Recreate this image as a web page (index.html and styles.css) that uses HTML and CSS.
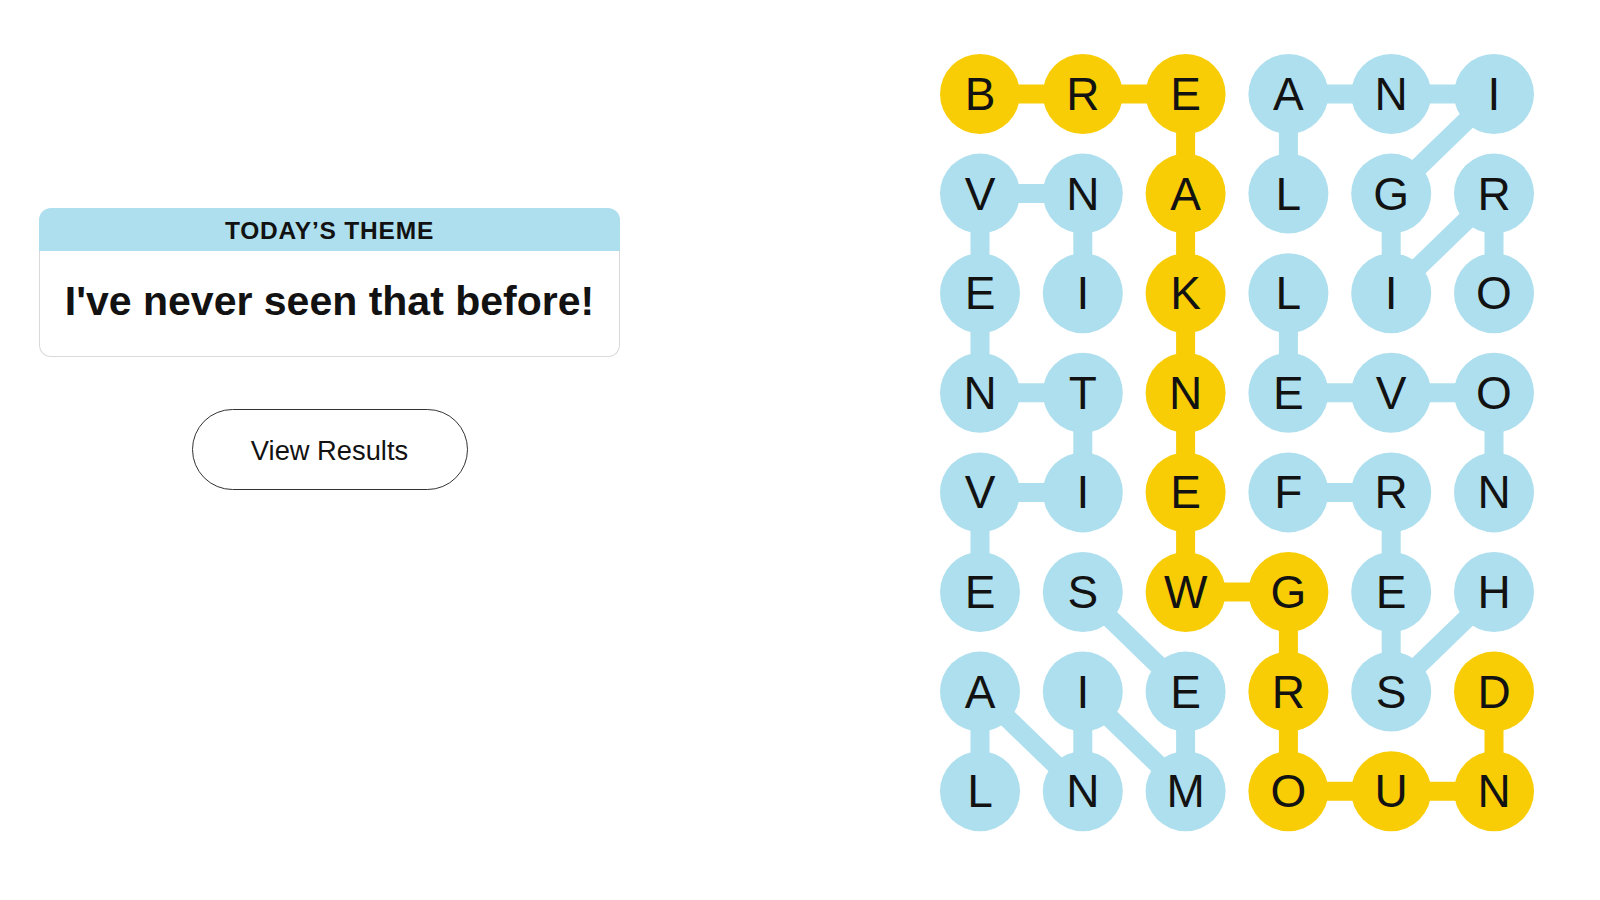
FILE: index.html
```html
<!DOCTYPE html>
<html lang="en">
<head>
<meta charset="utf-8">
<title>Strands</title>
<link rel="stylesheet" href="styles.css">
</head>
<body>
<main class="page">
  <section class="left">
    <div class="card">
      <div class="card-head">TODAY’S THEME</div>
      <div class="card-body">I've never seen that before!</div>
    </div>
    <button class="results">View Results</button>
  </section>
  <section class="board">
    <svg class="grid" width="594" height="778" viewBox="0 0 594 778" xmlns="http://www.w3.org/2000/svg">
      <g class="links-blue">
        <polyline points="142.8,239.2 142.8,139.6 40,139.6 40,239.2 40,338.8 142.8,338.8 142.8,438.4 40,438.4 40,538"/>
        <polyline points="554,239.2 554,139.6 451.2,239.2 451.2,139.6 554,40 451.2,40 348.4,40 348.4,139.6"/>
        <polyline points="554,438.4 554,338.8 451.2,338.8 348.4,338.8 348.4,239.2"/>
        <polyline points="348.4,438.4 451.2,438.4 451.2,538 451.2,637.6 554,538"/>
        <polyline points="142.8,538 245.6,637.6 245.6,737.2 142.8,637.6 142.8,737.2 40,637.6 40,737.2"/>
      </g>
      <g class="links-yellow">
        <polyline points="40,40 245.6,40 245.6,538 348.4,538 348.4,737.2 554,737.2 554,637.6"/>
      </g>
      <g class="dots-yellow">
        <circle cx="40" cy="40" r="40"/><circle cx="142.8" cy="40" r="40"/><circle cx="245.6" cy="40" r="40"/>
        <circle cx="245.6" cy="139.6" r="40"/><circle cx="245.6" cy="239.2" r="40"/><circle cx="245.6" cy="338.8" r="40"/>
        <circle cx="245.6" cy="438.4" r="40"/><circle cx="245.6" cy="538" r="40"/><circle cx="348.4" cy="538" r="40"/>
        <circle cx="348.4" cy="637.6" r="40"/><circle cx="348.4" cy="737.2" r="40"/><circle cx="451.2" cy="737.2" r="40"/>
        <circle cx="554" cy="737.2" r="40"/><circle cx="554" cy="637.6" r="40"/>
      </g>
      <g class="dots-blue">
        <circle cx="348.4" cy="40" r="40"/><circle cx="451.2" cy="40" r="40"/><circle cx="554" cy="40" r="40"/>
        <circle cx="40" cy="139.6" r="40"/><circle cx="142.8" cy="139.6" r="40"/><circle cx="348.4" cy="139.6" r="40"/><circle cx="451.2" cy="139.6" r="40"/><circle cx="554" cy="139.6" r="40"/>
        <circle cx="40" cy="239.2" r="40"/><circle cx="142.8" cy="239.2" r="40"/><circle cx="348.4" cy="239.2" r="40"/><circle cx="451.2" cy="239.2" r="40"/><circle cx="554" cy="239.2" r="40"/>
        <circle cx="40" cy="338.8" r="40"/><circle cx="142.8" cy="338.8" r="40"/><circle cx="348.4" cy="338.8" r="40"/><circle cx="451.2" cy="338.8" r="40"/><circle cx="554" cy="338.8" r="40"/>
        <circle cx="40" cy="438.4" r="40"/><circle cx="142.8" cy="438.4" r="40"/><circle cx="348.4" cy="438.4" r="40"/><circle cx="451.2" cy="438.4" r="40"/><circle cx="554" cy="438.4" r="40"/>
        <circle cx="40" cy="538" r="40"/><circle cx="142.8" cy="538" r="40"/><circle cx="451.2" cy="538" r="40"/><circle cx="554" cy="538" r="40"/>
        <circle cx="40" cy="637.6" r="40"/><circle cx="142.8" cy="637.6" r="40"/><circle cx="245.6" cy="637.6" r="40"/><circle cx="451.2" cy="637.6" r="40"/>
        <circle cx="40" cy="737.2" r="40"/><circle cx="142.8" cy="737.2" r="40"/><circle cx="245.6" cy="737.2" r="40"/>
      </g>
      <g class="letters">
        <text x="40" y="56">B</text><text x="142.8" y="56">R</text><text x="245.6" y="56">E</text><text x="348.4" y="56">A</text><text x="451.2" y="56">N</text><text x="554" y="56">I</text>
        <text x="40" y="155.6">V</text><text x="142.8" y="155.6">N</text><text x="245.6" y="155.6">A</text><text x="348.4" y="155.6">L</text><text x="451.2" y="155.6">G</text><text x="554" y="155.6">R</text>
        <text x="40" y="255.2">E</text><text x="142.8" y="255.2">I</text><text x="245.6" y="255.2">K</text><text x="348.4" y="255.2">L</text><text x="451.2" y="255.2">I</text><text x="554" y="255.2">O</text>
        <text x="40" y="354.8">N</text><text x="142.8" y="354.8">T</text><text x="245.6" y="354.8">N</text><text x="348.4" y="354.8">E</text><text x="451.2" y="354.8">V</text><text x="554" y="354.8">O</text>
        <text x="40" y="454.4">V</text><text x="142.8" y="454.4">I</text><text x="245.6" y="454.4">E</text><text x="348.4" y="454.4">F</text><text x="451.2" y="454.4">R</text><text x="554" y="454.4">N</text>
        <text x="40" y="554">E</text><text x="142.8" y="554">S</text><text x="245.6" y="554">W</text><text x="348.4" y="554">G</text><text x="451.2" y="554">E</text><text x="554" y="554">H</text>
        <text x="40" y="653.6">A</text><text x="142.8" y="653.6">I</text><text x="245.6" y="653.6">E</text><text x="348.4" y="653.6">R</text><text x="451.2" y="653.6">S</text><text x="554" y="653.6">D</text>
        <text x="40" y="753.2">L</text><text x="142.8" y="753.2">N</text><text x="245.6" y="753.2">M</text><text x="348.4" y="753.2">O</text><text x="451.2" y="753.2">U</text><text x="554" y="753.2">N</text>
      </g>
    </svg>
  </section>
</main>
</body>
</html>
```
FILE: styles.css
```css
html, body {
  margin: 0;
  padding: 0;
  background: #ffffff;
}

body {
  font-family: "Liberation Sans", Arial, sans-serif;
  color: #121212;
}

.page {
  display: flex;
  align-items: flex-start;
  width: 1600px;
  height: 900px;
  box-sizing: border-box;
  padding: 54px 66px 0 39px;
}

.left {
  width: 581px;
  padding-top: 154px;
  display: flex;
  flex-direction: column;
  align-items: center;
}

.card {
  width: 581px;
}

.card-head {
  height: 43px;
  box-sizing: border-box;
  padding-top: 3px;
  background: #aedfee;
  border-radius: 12px 12px 0 0;
  display: flex;
  align-items: center;
  justify-content: center;
  font-size: 24.5px;
  font-weight: 700;
  letter-spacing: 0.8px;
  color: #121212;
}

.card-body {
  height: 106px;
  box-sizing: border-box;
  border: 1.5px solid #d9d9d9;
  border-top: none;
  border-radius: 0 0 12px 12px;
  padding-bottom: 4px;
  display: flex;
  align-items: center;
  justify-content: center;
  font-size: 41px;
  font-weight: 700;
  color: #121212;
}

.results {
  margin-top: 52px;
  width: 276px;
  height: 81px;
  border: 1.5px solid #333333;
  border-radius: 41px;
  background: #ffffff;
  font-family: "Liberation Sans", Arial, sans-serif;
  font-size: 27.3px;
  color: #121212;
  padding: 2px 0 0 0;
}

.board {
  margin-left: auto;
}

.grid {
  display: block;
}

.links-blue polyline {
  fill: none;
  stroke: #aedfee;
  stroke-width: 19;
  stroke-linejoin: round;
}

.links-yellow polyline {
  fill: none;
  stroke: #f8cd05;
  stroke-width: 19;
  stroke-linejoin: round;
}

.dots-yellow circle {
  fill: #f8cd05;
}

.dots-blue circle {
  fill: #aedfee;
}

.letters text {
  font-family: "Liberation Sans", Arial, sans-serif;
  font-size: 46px;
  fill: #121212;
  text-anchor: middle;
}
```
